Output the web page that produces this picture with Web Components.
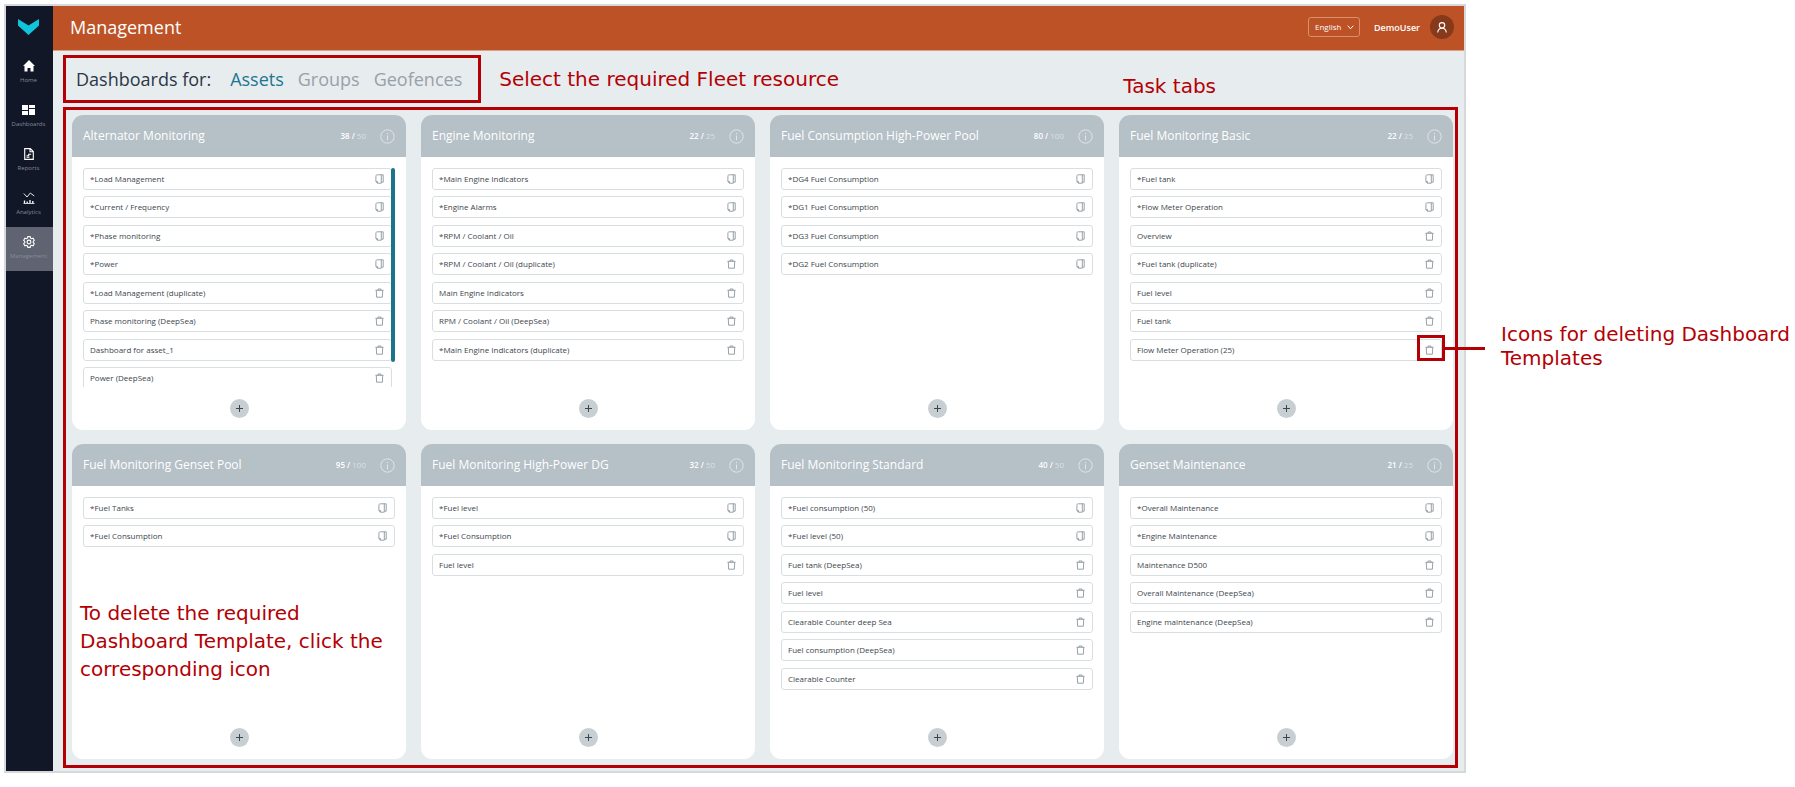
<!DOCTYPE html>
<html lang="en">
<head>
<meta charset="utf-8">
<title>Management</title>
<style>
  body { margin: 0; background: #fff; font-family: "Open Sans", sans-serif; }
</style>
</head>
<body>
<management-page></management-page>

<script>
const RED = '#b40004';

const ICONS = {
  logo: '<svg width="21" height="16" viewBox="0 0 21 16"><path d="M0 0 10.500 6.500 21 0V6.500L10.500 16 0 6.500Z" fill="#10c4dc"/></svg>',
  home: '<svg width="12" height="12" viewBox="0 0 12 12"><path d="M6 0 0 6h1.500v5.500h3V8h3v3.500h3V6H12Z" fill="#fff"/></svg>',
  dashboards: '<svg width="13" height="12" viewBox="0 0 13 12"><path d="M0 1h6v5H0zM0 7h6v4H0zM7 1h6v3H7zM7 5h6v6H7z" fill="#fff"/></svg>',
  reports: '<svg width="12" height="12" viewBox="0 0 12 12" fill="none" stroke="#fff" stroke-width="1.100"><path d="M1.700.6h5.600l3 3v7.800H1.700zM7 .8v3h3M3.500 7.700h2.200V6.200h2.500M3.500 9.300h3"/></svg>',
  analytics: '<svg width="12" height="12" viewBox="0 0 12 12" fill="none" stroke="#fff"><path d="M.8 1.500 4 5 7.300 1 11.300 4" stroke-width=".9"/><path d="M.5 11.500h11" stroke-width=".8"/><path d="M1.500 11V8.500M4.200 11V9.600M7 11V8M9.800 11V8.900" stroke-width="1.300"/></svg>',
  management: '<svg width="12" height="12" viewBox="0 0 12 12" fill="none" stroke="#fff" stroke-width="1.100"><path d="M4.800.6h2.400l.4 1.500 1 .6 1.500-.5 1.200 2.100-1.100 1.100v1.200l1.100 1.100-1.200 2.100-1.500-.5-1 .6-.4 1.500H4.800l-.4-1.500-1-.6-1.500.5L.7 7.700l1.100-1.100V5.400L.7 4.300l1.200-2.100 1.500.5 1-.6Z"/><circle cx="6" cy="6" r="1.900"/></svg>',
  user: '<svg width="10" height="11" viewBox="0 0 10 11" fill="none" stroke="#fff" stroke-width="1.100"><circle cx="5" cy="3.300" r="2.700"/><path d="M.7 10.500C.9 7.800 2.500 6.200 5 6.200s4.100 1.600 4.300 4.300"/></svg>',
  info: '<svg width="15" height="15" viewBox="0 0 15 15" fill="none" stroke="#e4e9ec"><circle cx="7.500" cy="7.500" r="6.700" stroke-width=".9"/><path d="M7.500 4v1.200M7.500 6.500v4.800" stroke-width=".9"/></svg>',
  copy: '<svg width="9" height="10" viewBox="0 0 9 10" fill="none" stroke="#8d979e" stroke-width=".9"><path d="M2.400.8H8.200V8.200H6.600M2.400.8C1.400.8.9 1.300.9 2.300V7.600L2.500 9.200H6.300V.8M2.500 9.200V7.600H.9"/></svg>',
  trash: '<svg width="9" height="10" viewBox="0 0 9 10" fill="none" stroke="#8d979e" stroke-width=".9"><path d="M.5 2.300h8M3 2.300V1h3v1.300M1.300 2.300 1.600 9.200h5.800L7.700 2.300"/></svg>',
  plus: '<svg width="9" height="9" viewBox="0 0 9 9" stroke="#3b464e" stroke-width="1"><path d="M4.500 1v7M1 4.500h7"/></svg>'
};

const CARDS = [
  ['Alternator Monitoring', 38, 50, ['*Load Management', '*Current / Frequency', '*Phase monitoring', '*Power', '-*Load Management (duplicate)', '-Phase monitoring (DeepSea)', '-Dashboard for asset_1', '-Power (DeepSea)']],
  ['Engine Monitoring', 22, 25, ['*Main Engine Indicators', '*Engine Alarms', '*RPM / Coolant / Oil', '-*RPM / Coolant / Oil (duplicate)', '-Main Engine Indicators', '-RPM / Coolant / Oil (DeepSea)', '-*Main Engine Indicators (duplicate)']],
  ['Fuel Consumption High-Power Pool', 80, 100, ['*DG4 Fuel Consumption', '*DG1 Fuel Consumption', '*DG3 Fuel Consumption', '*DG2 Fuel Consumption']],
  ['Fuel Monitoring Basic', 22, 25, ['*Fuel tank', '*Flow Meter Operation', '-Overview', '-*Fuel tank (duplicate)', '-Fuel level', '-Fuel tank', '-!Flow Meter Operation (25)']],
  ['Fuel Monitoring Genset Pool', 95, 100, ['*Fuel Tanks', '*Fuel Consumption']],
  ['Fuel Monitoring High-Power DG', 32, 50, ['*Fuel level', '*Fuel Consumption', '-Fuel level']],
  ['Fuel Monitoring Standard', 40, 50, ['*Fuel consumption (50)', '*Fuel level (50)', '-Fuel tank (DeepSea)', '-Fuel level', '-Clearable Counter deep Sea', '-Fuel consumption (DeepSea)', '-Clearable Counter']],
  ['Genset Maintenance', 21, 25, ['*Overall Maintenance', '*Engine Maintenance', '-Maintenance D500', '-Overall Maintenance (DeepSea)', '-Engine maintenance (DeepSea)']]
];

const BASE = `
  *, *::before, *::after { box-sizing: border-box; }
  button { font: inherit; color: inherit; border: 0; background: none; padding: 0; margin: 0; cursor: pointer; }
  a { color: inherit; text-decoration: none; }
  svg { display: block; }
`;

function define(name, render) {
  customElements.define(name, class extends HTMLElement {
    connectedCallback() {
      if (this.shadowRoot) return;
      const template = document.createElement('template');
      template.innerHTML = render(this);
      this.attachShadow({ mode: 'open' }).append(template.content.cloneNode(true));
    }
  });
}

/* Red explanatory text */
define('callout-note', () => `
  <style>
    :host { display: block; color: ${RED}; font: 20px/24px Verdana, "DejaVu Sans", sans-serif; }
    :host([loose]) { line-height: 28px; }
  </style><slot></slot>`);

/* One link of the side bar */
define('side-link', el => `
  <style>${BASE}
    :host { display: block; }
    a { height: 44px; padding: 9px 2px 0 0; display: flex; flex-direction: column; align-items: center; gap: 4px;
        font-size: 6px; line-height: 8px; color: #858a98; }
    :host([active]) a { background: #606472; }
  </style>
  <a href="#${el.getAttribute('icon')}">${ICONS[el.getAttribute('icon')]}<slot></slot></a>`);

define('side-bar', () => `
  <style>${BASE}
    :host { display: block; background: #111726; }
    .logo { height: 45px; padding: 13px 2px 0 0; display: flex; justify-content: center; }
  </style>
  <a class="logo" href="#" aria-label="Start">${ICONS.logo}</a>
  <nav>
    <side-link icon="home">Home</side-link>
    <side-link icon="dashboards">Dashboards</side-link>
    <side-link icon="reports">Reports</side-link>
    <side-link icon="analytics">Analytics</side-link>
    <side-link icon="management" active>Management</side-link>
  </nav>`);

define('top-bar', () => `
  <style>${BASE}
    :host { display: flex; align-items: center; height: 45px; padding: 0 10px 2px 17px; background: #bc5225; color: #fff;
            border-bottom: 1px solid #d9a18a; }
    h1 { margin: 0 auto 0 0; font-size: 18px; line-height: 24px; font-weight: 400; }
    .lang { position: relative; margin-right: 14px; }
    .lang svg { position: absolute; right: 6px; top: 8px; pointer-events: none; }
    select { display: block; appearance: none; width: 52px; height: 20px; padding: 0 0 0 6px; border: 1px solid #d8906e; border-radius: 3px;
             background: transparent; color: #fff; font: 500 8px/16px "Open Sans", sans-serif; }
    .user { display: flex; align-items: center; gap: 10px; font-size: 9px; font-weight: 600; }
    .avatar { width: 24px; height: 24px; border-radius: 50%; background: #863a1b; display: grid; place-items: center; }
  </style>
  <h1>Management</h1>
  <div class="lang">
    <select aria-label="Language"><option>English</option></select>
    <svg width="7" height="5" viewBox="0 0 7 5" fill="none" stroke="#fff" stroke-width="1"><path d="M.7.7 3.500 3.800 6.300.7"/></svg>
  </div>
  <button class="user">DemoUser<span class="avatar">${ICONS.user}</span></button>`);

define('resource-tabs', () => `
  <style>${BASE}
    :host { display: flex; align-items: center; height: 48px; padding: 0 16px 0 10px; border: 3px solid ${RED};
            font-size: 18px; line-height: 24px; white-space: nowrap; color: #98a1a9; }
    h2 { margin: 0 19px 0 0; font: inherit; color: #2b3745; }
    nav { display: flex; gap: 14px; }
    [aria-current] { color: #1c7790; }
  </style>
  <h2>Dashboards for:</h2>
  <nav><a href="#assets" aria-current="page">Assets</a><a href="#groups">Groups</a><a href="#geofences">Geofences</a></nav>`);

/* One dashboard template in a card; "marked" outlines its button and draws a leader line */
define('template-row', el => {
  const kind = el.getAttribute('kind');
  return `
  <style>${BASE}
    :host { position: relative; display: flex; align-items: center; justify-content: space-between; height: 22px; box-sizing: border-box;
            padding: 0 5px 0 6px; border: 1px solid #d9dee1; border-radius: 3px; background: #fff;
            font-size: 8px; line-height: 12px; color: #3c464e; }
    button { width: 14px; height: 14px; display: grid; place-items: center; }
    .mark { position: absolute; right: -4px; top: -5px; width: 28px; height: 26px; border: 3px solid ${RED}; pointer-events: none; }
    .mark::after { content: ""; position: absolute; left: 100%; top: 9px; width: 43px; height: 3px; background: ${RED}; }
  </style>
  <slot></slot>
  <button aria-label="${kind === 'trash' ? 'Delete' : 'Copy'}">${ICONS[kind]}</button>
  ${el.hasAttribute('marked') ? '<span class="mark"></span>' : ''}`;
});

define('task-card', el => `
  <style>${BASE}
    :host { position: relative; display: flex; flex-direction: column; height: 315px; background: #fff; border-radius: 11px; }
    header { display: flex; align-items: center; height: 42px; padding: 0 11px; border-radius: 11px 11px 0 0;
             background: #b5c0c7; color: #fff; }
    h3 { margin: 0 auto 0 0; font-size: 12px; line-height: 16px; font-weight: 400; white-space: nowrap; }
    .count { margin-right: 14px; font-size: 8px; line-height: 12px; font-weight: 600; }
    .count span { font-weight: 400; color: #dbe1e5; }
    .list { height: 219px; margin: 11px 11px 0; }
    :host([scroll]) .list { margin-right: 14px; overflow-y: auto; scrollbar-width: none; }
    .thumb { position: absolute; right: 11px; top: 53px; width: 4px; height: 194px; border-radius: 2px; background: #1c7488; }
    .add { width: 19px; height: 19px; margin: 12px auto 0; border-radius: 50%; background: #c8cfd3; display: grid; place-items: center; }
    ::slotted(template-row) { margin-bottom: 7px; }
    ::slotted(template-row:nth-of-type(odd)) { margin-bottom: 6px; }
    ::slotted(callout-note) { position: absolute; left: 8px; top: 155px; width: 310px; }
  </style>
  <header>
    <h3>${el.getAttribute('heading')}</h3>
    <div class="count">${el.getAttribute('used')} / <span>${el.getAttribute('total')}</span></div>
    <button aria-label="Information">${ICONS.info}</button>
  </header>
  <div class="list"><slot></slot></div>
  ${el.hasAttribute('scroll') ? '<div class="thumb"></div>' : ''}
  <button class="add" aria-label="Add dashboard">${ICONS.plus}</button>
  <slot name="note"></slot>`);

define('task-grid', () => `
  <style>${BASE}
    :host { display: grid; grid-template-columns: repeat(4, minmax(0, 1fr)); gap: 14px 15px; padding: 5px 2px 6px 6px; border: 3px solid ${RED}; }
  </style>
  ${CARDS.map(([title, used, total, rows], i) => `
    <task-card heading="${title}" used="${used}" total="${total}"${rows.length > 7 ? ' scroll' : ''}>
      ${rows.map(row => `<template-row kind="${row[0] === '-' ? 'trash' : 'copy'}"${row[1] === '!' ? ' marked' : ''}>${row.replace(/^-!?/, '')}</template-row>`).join('')}
      ${i === 4 ? '<callout-note slot="note" loose>To delete the required Dashboard Template, click the corresponding icon</callout-note>' : ''}
    </task-card>`).join('')}`);

define('management-page', () => `
  <style>${BASE}
    :host { display: grid; grid-template-columns: minmax(0, 1fr) 329px; padding: 4px 0 0 4px; }
    .frame { display: grid; grid-template-columns: 47px minmax(0, 1fr); border: 2px solid #d6d8da; background: #e7ecef; }
    .tools { display: flex; align-items: center; margin: 4px 6px 4px 10px; }
    .select { margin-left: 18px; }
    .tabs { margin: 14px 242px 0 auto; }
    task-grid { margin: 0 6px 3px 10px; }
    .delete { margin: 318px 0 0 35px; }
  </style>
  <div class="frame">
    <side-bar></side-bar>
    <main>
      <top-bar></top-bar>
      <div class="tools">
        <resource-tabs></resource-tabs>
        <callout-note class="select">Select the required Fleet resource</callout-note>
        <callout-note class="tabs">Task tabs</callout-note>
      </div>
      <task-grid></task-grid>
    </main>
  </div>
  <callout-note class="delete">Icons for deleting Dashboard Templates</callout-note>`);
</script>
</body>
</html>
